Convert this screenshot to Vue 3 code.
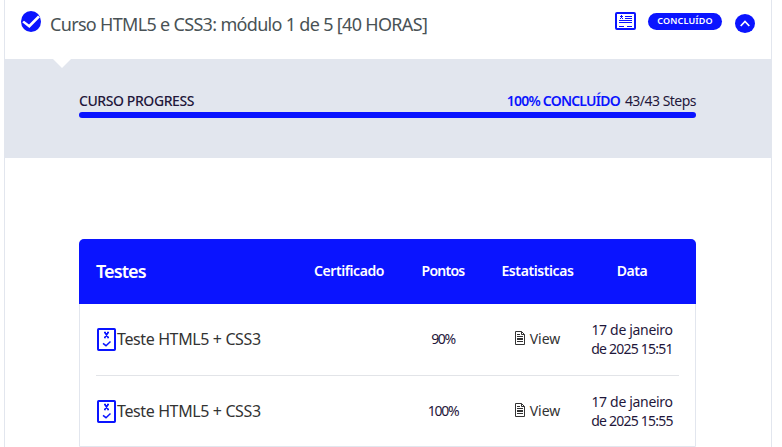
<script setup>
const quizzes = [
  { title: 'Teste HTML5 + CSS3', score: '90%', day: '17 de janeiro', time: 'de 2025 15:51' },
  { title: 'Teste HTML5 + CSS3', score: '100%', day: '17 de janeiro', time: 'de 2025 15:55' },
]
</script>

<template>
  <main class="course">
    <header class="course-head">
      <svg class="status" viewBox="0 0 20 21">
        <ellipse cx="10" cy="10.5" rx="10" ry="10.5" fill="#0a14ff" />
        <path d="M1.2 11.2 3 9.8 8 13.6 17 4.4 19 6.3 8.4 17Z" fill="#fff" />
      </svg>
      <h1>Curso HTML5 e CSS3: módulo 1 de 5 [40 HORAS]</h1>
      <svg class="certificate" viewBox="0 0 21 18">
        <rect x="1" y="1" width="19" height="16" rx="1" fill="none" stroke="#0a14ff" stroke-width="2" />
        <path d="M6 3h1v1h1v1H7v1h1v1H7V6H6v1H5V6h1V5H5V4h1zM10 4h7v1h-7zM10 6h7v1h-7zM4 8h13v1H4zM4 10h13v1H4zM4 14h5v1H4zM12 14h5v1h-5z" fill="#0a14ff" />
      </svg>
      <span class="badge">CONCLUÍDO</span>
      <svg class="toggle" viewBox="0 0 20 19">
        <ellipse cx="10" cy="9.5" rx="10" ry="9.5" fill="#0a14ff" />
        <path d="M5.7 12 10 7.4 14.3 12" fill="none" stroke="#fff" stroke-width="1.7" />
      </svg>
    </header>

    <section class="progress">
      <div class="progress-labels">
        <span class="t-progress">CURSO PROGRESS</span>
        <span class="progress-right"><b class="t-done">100% CONCLUÍDO</b><span class="t-steps">43/43 Steps</span></span>
      </div>
      <div class="bar"></div>
    </section>

    <section class="table">
      <div class="row table-head">
        <span class="t-tests">Testes</span>
        <span class="cell t-cert">Certificado</span>
        <span class="cell t-points">Pontos</span>
        <span class="cell t-stats">Estatisticas</span>
        <span class="cell t-data">Data</span>
      </div>
      <div v-for="(quiz, i) in quizzes" :key="i" class="row quiz">
        <span class="quiz-name">
          <svg class="quiz-icon" viewBox="0 0 19 23">
            <rect x="1" y="1" width="17" height="21" rx=".7" fill="none" stroke="#0a14ff" stroke-width="2" />
            <path d="M7 4.5h2M10 4.5h2M7 9.5h2M10 9.5h2M7.900 4.500 11.100 9.500M11.100 4.500 7.900 9.500" fill="none" stroke="#0a14ff" stroke-width="1.500" />
            <path d="M6 15.300 9 17.700 13.500 13.500" fill="none" stroke="#0a14ff" stroke-width="1.500" />
          </svg>
          <span class="t-quiz">{{ quiz.title }}</span>
        </span>
        <span></span>
        <span class="cell score">{{ quiz.score }}</span>
        <span class="cell view">
          <svg class="doc" viewBox="0 0 10 14">
            <path d="M.5.5h6l3 3v10h-9zM6.500.5v3h3M2 3.500h3M2 5.500h6M2 7.500h6M2 8.500h6M2 10.500h6" fill="none" stroke="#333" stroke-width="1" />
          </svg>
          <span>View</span>
        </span>
        <span class="date"><span class="t-day">{{ quiz.day }}</span><span class="t-time">{{ quiz.time }}</span></span>
      </div>
    </section>
  </main>
</template>

<style>
body {
  background: #fff;
  overflow: hidden;
}
</style>

<style scoped>
.course {
  box-sizing: border-box;
  width: 768px;
  height: 447px;
  margin-left: 4px;
  border: solid #e2e6ee;
  border-width: 0 1px;
  font: 14px/20px "Noto Sans", sans-serif;
  color: #1f173b;
  white-space: nowrap;
}
.course-head {
  display: flex;
  align-items: flex-start;
  height: 59px;
}
.status {
  width: 20px;
  height: 21px;
  margin: 11px 9px 0 16px;
}
h1 {
  width: 565px;
  margin: 11px 0 0;
  font-size: 18px;
  line-height: 26px;
  font-weight: 400;
  letter-spacing: -0.68px;
  color: #495255;
}
.certificate {
  width: 21px;
  height: 18px;
  margin-top: 12px;
}
.badge {
  width: 74px;
  height: 17px;
  margin: 13px 13px 0 12px;
  border-radius: 9px;
  background: #0a14ff;
  color: #fff;
  font-size: 9px;
  line-height: 16px;
  font-weight: 600;
  letter-spacing: 0.15px;
  text-align: center;
}
.toggle {
  width: 20px;
  height: 19px;
  margin-top: 14px;
}
.progress {
  position: relative;
  box-sizing: border-box;
  height: 99px;
  margin: 0 -1px;
  padding: 32px 76px 0 75px;
  background: #e2e6ee;
}
.progress::before {
  content: "";
  position: absolute;
  top: 0;
  left: 49px;
  border: solid transparent;
  border-width: 9px 9px 0;
  border-top-color: #fff;
}
.progress-labels {
  display: flex;
  justify-content: space-between;
  height: 21px;
}
.t-progress {
  font-weight: 500;
  letter-spacing: -0.43px;
}
.progress-right {
  display: flex;
  gap: 5px;
}
.t-done {
  font-weight: 600;
  letter-spacing: -0.78px;
  color: #0a14ff;
}
.t-steps {
  letter-spacing: -0.52px;
}
.bar {
  height: 6px;
  border-radius: 3px;
  background: #0a14ff;
}
.table {
  box-sizing: border-box;
  width: 617px;
  height: 208px;
  margin: 81px 0 0 74px;
  border: 1px solid #e2e6ee;
  border-radius: 5px 5px 0 0;
}
.row {
  display: grid;
  grid-template-columns: 206px 94px 94px 95px 94px;
  align-items: center;
  box-sizing: border-box;
}
.table-head {
  height: 65px;
  margin: -1px -1px 0;
  padding: 0 17px 1px;
  border-radius: 5px 5px 0 0;
  background: #0a14ff;
  color: #fff;
  font-weight: 600;
}
.t-tests {
  font-size: 18px;
  letter-spacing: -0.9px;
}
.cell {
  text-align: center;
}
.t-cert {
  letter-spacing: -0.42px;
}
.t-points {
  letter-spacing: -0.75px;
}
.t-stats {
  letter-spacing: -0.4px;
}
.t-data {
  letter-spacing: -0.4px;
}
.quiz {
  height: 71px;
  margin: 0 16px;
  padding-bottom: 1px;
}
.quiz:nth-child(2) {
  height: 72px;
  border-bottom: 1px solid #e2e4e8;
}
.quiz-name {
  display: flex;
  align-items: center;
  font-size: 16px;
  letter-spacing: -0.38px;
  color: #333;
}
.quiz-icon {
  width: 19px;
  height: 23px;
  margin: 0 1px;
}
.score {
  letter-spacing: -1.3px;
}
.view {
  display: flex;
  align-items: center;
  justify-content: center;
  gap: 5px;
  color: #333;
}
.doc {
  width: 10px;
  height: 14px;
  margin-top: -2px;
}
.date {
  display: flex;
  flex-direction: column;
  align-items: center;
  line-height: 19.5px;
}
.t-day {
  letter-spacing: -0.33px;
}
.t-time {
  letter-spacing: -0.78px;
}
</style>
